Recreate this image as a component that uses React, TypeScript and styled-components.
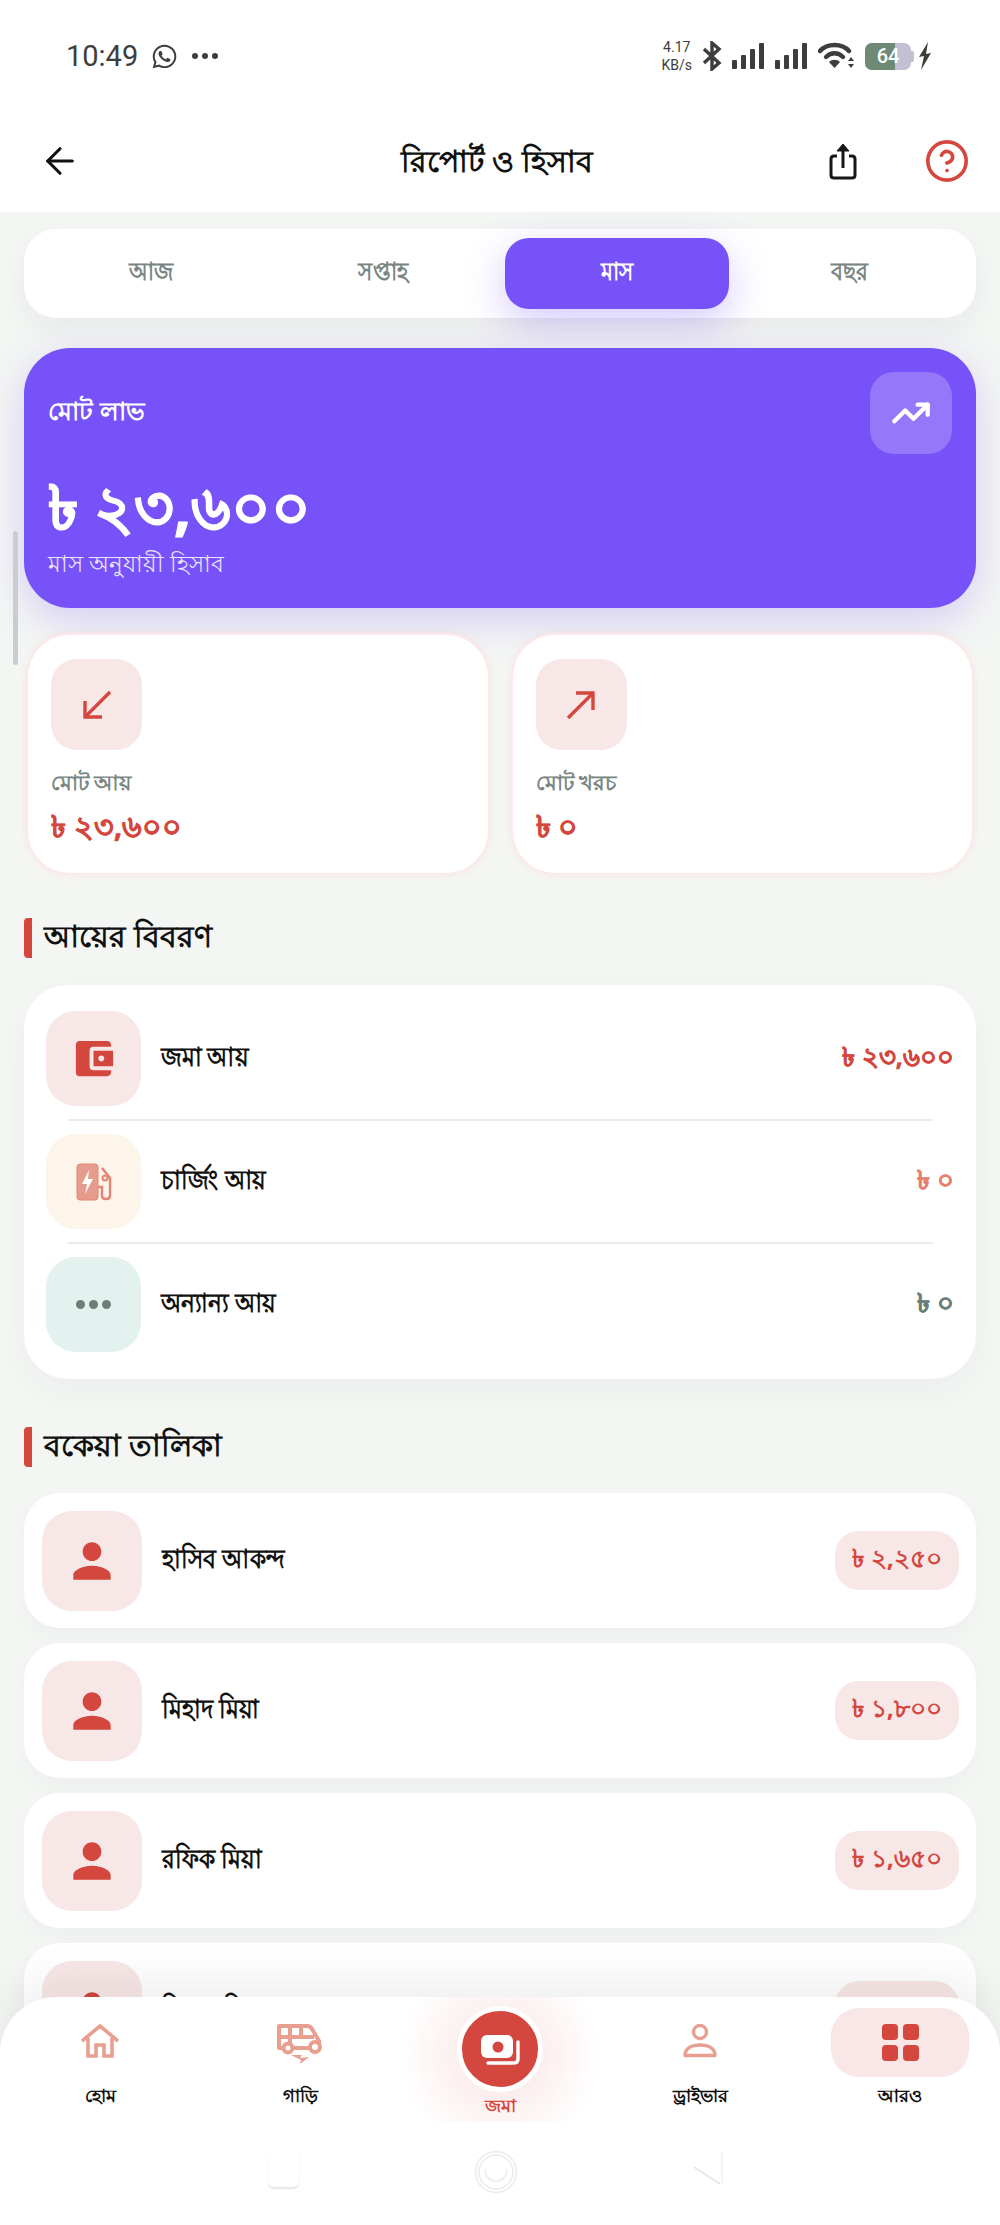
import styled, { createGlobalStyle } from "styled-components";
import { CircleHelp, ArrowLeft, TrendingUp } from "lucide-react";
import { FaWhatsapp } from "react-icons/fa";
import { MdAccountBalanceWallet, MdPerson } from "react-icons/md";

const RED = "#d4473e";
const PURPLE = "#7752f8";
const SOFT = "#e89f8f";
const INK = "#3d3d3d";
const FONT = `"Noto Sans", "Liberation Sans", sans-serif`;

const GlobalStyle = createGlobalStyle`
    html, body { margin: 0; padding: 0; background: #fff; }
    * { box-sizing: border-box; }
`;

function BluetoothIcon() {
    return (
        <svg width="20" height="30" viewBox="0 0 20 30" fill="none" stroke={INK} strokeWidth="3.4">
            <path d="M2 8 L17 22 L10 28 V2 L17 8 L2 22" />
        </svg>
    );
}

function SignalBars() {
    return (
        <svg width="33" height="26" viewBox="0 0 33 26" fill={INK}>
            <rect x="0" y="17" width="5" height="9" rx="1" />
            <rect x="9" y="12" width="5" height="14" rx="1" />
            <rect x="18" y="6" width="5" height="20" rx="1" />
            <rect x="27" y="0" width="5" height="26" rx="1" />
        </svg>
    );
}

function WifiIcon() {
    return (
        <svg width="37" height="28" viewBox="0 0 37 28" fill="none">
            <path d="M2 9 C9 1 24 1 31 9" stroke={INK} strokeWidth="4.4" strokeLinecap="round" />
            <path d="M8 15 C13 10 20 10 25 15" stroke={INK} strokeWidth="4.4" strokeLinecap="round" />
            <path d="M11 20 C14 17 19 17 22 20 L16.5 26 Z" fill={INK} />
            <path d="M30 19 L33 15 L36 19 Z M30 22 L36 22 L33 26 Z" fill={INK} />
        </svg>
    );
}

function BoltIcon() {
    return (
        <svg width="14" height="28" viewBox="0 0 14 28" fill={INK}>
            <path d="M10 0 L1 15 L6 14 L3 28 L13 11 L8 12 Z" />
        </svg>
    );
}

function ShareIcon() {
    return (
        <svg width="28" height="38" viewBox="0 0 28 38" fill="none" stroke="#15181a" strokeWidth="3">
            <path d="M8 14 H5 Q2 14 2 17 V33 Q2 36 5 36 H23 Q26 36 26 33 V17 Q26 14 23 14 H20" />
            <path d="M14 26 V4" />
            <path d="M8 9 L14 2 L20 9 Z" fill="#15181a" strokeWidth="1" />
        </svg>
    );
}

function ArrowIn() {
    return (
        <svg width="30" height="30" viewBox="0 0 30 30" fill="none" stroke={RED} strokeWidth="3.4">
            <path d="M28 2 L4 26" />
            <path d="M3 11 V27 H20" />
        </svg>
    );
}

function ArrowOut() {
    return (
        <svg width="30" height="30" viewBox="0 0 30 30" fill="none" stroke={RED} strokeWidth="3.4">
            <path d="M2 28 L26 4" />
            <path d="M10 3 H27 V20" />
        </svg>
    );
}

function ChargeIcon() {
    return (
        <svg width="36" height="38" viewBox="0 0 36 38">
            <rect x="1" y="1" width="21" height="36" rx="3" fill="#e59c8d" stroke="#e58474" />
            <path d="M13 7 L6 21 L11 21 L9 31 L17 16 L12 16 Z" fill="#fff" />
            <path d="M22 24 H26 V33 C26 37 34 37 34 33 V15 L26 5" fill="none" stroke="#e58474" strokeWidth="2.4" />
            <circle cx="29" cy="15" r="2.5" fill="none" stroke="#e58474" strokeWidth="2" />
        </svg>
    );
}

function HomeIcon() {
    return (
        <svg width="38" height="34" viewBox="0 0 38 34" fill="none" stroke={SOFT} strokeWidth="3.6">
            <path d="M1 17 L19 2 L37 17" />
            <path d="M7 14 V32 H15 V21 H23 V32 H31 V14" />
        </svg>
    );
}

function VehicleIcon() {
    return (
        <svg width="46" height="40" viewBox="0 0 46 40" fill="none" stroke={SOFT} strokeWidth="4">
            <path d="M2 2 H30 C33 2 34 3 35 5 L42 17 V24 H2 Z" strokeLinejoin="round" />
            <path d="M13 2 V24 M2 13 H37 M24 2 V13" />
            <circle cx="11" cy="24" r="4.5" fill="#fff" />
            <circle cx="38" cy="23" r="5" fill="#fff" />
            <path d="M14 31 L25 31 L23 34 L32 33 L23 40 L24 36 Z" fill={SOFT} stroke="none" />
        </svg>
    );
}

function DriverIcon() {
    return (
        <svg width="34" height="34" viewBox="0 0 34 34" fill="none" stroke={SOFT} strokeWidth="3.4">
            <circle cx="17" cy="8" r="6.5" />
            <path d="M2 31.5 C2 24 9 21 17 21 C25 21 32 24 32 31.5 Z" strokeLinejoin="round" />
        </svg>
    );
}

function AppsIcon() {
    return (
        <svg width="37" height="37" viewBox="0 0 37 37" fill={RED}>
            <rect x="0" y="0" width="16" height="16" rx="4" />
            <rect x="21" y="0" width="16" height="16" rx="4" />
            <rect x="0" y="21" width="16" height="16" rx="4" />
            <rect x="21" y="21" width="16" height="16" rx="4" />
        </svg>
    );
}

function CashIcon() {
    return (
        <svg width="42" height="32" viewBox="0 0 42 32" fill="none">
            <rect x="2" y="2" width="32" height="23" rx="6" fill="#fff" />
            <circle cx="19" cy="14" r="5.5" fill={RED} />
            <path d="M39 9 V26 Q39 30 35 30 H9" stroke="#fff" strokeWidth="3.4" strokeLinecap="round" />
        </svg>
    );
}

function GestureHome() {
    return (
        <svg width="44" height="44" viewBox="0 0 44 44" fill="none" stroke="#ececec" strokeWidth="1.6">
            <circle cx="22" cy="22" r="20.5" />
            <circle cx="22" cy="22" r="17" />
            <path d="M11 19 C11 27 16 31 22 31 C28 31 33 27 33 19" />
        </svg>
    );
}

function GestureBackIcon() {
    return (
        <svg width="30" height="36" viewBox="0 0 30 36" fill="none">
            <path d="M1 17 L27 34" stroke="#e6e6e6" strokeWidth="2" />
            <path d="M29 2 V33" stroke="#f3f3f3" strokeWidth="2" />
        </svg>
    );
}

const incomeRows = [
    { label: "জমা আয়", amount: "৳ ২৩,৬০০", tone: "wallet" },
    { label: "চার্জিং আয়", amount: "৳ ০", tone: "charge" },
    { label: "অন্যান্য আয়", amount: "৳ ০", tone: "other" },
] as const;

const dues = [
    { name: "হাসিব আকন্দ", amount: "৳ ২,২৫০" },
    { name: "মিহাদ মিয়া", amount: "৳ ১,৮০০" },
    { name: "রফিক মিয়া", amount: "৳ ১,৬৫০" },
    { name: "সিয়াম মিয়া", amount: "৳ ১,৫০০" },
];

function App() {
    return (
        <Screen>
            <GlobalStyle />
            <StatusBar>
                <StatusLeft>
                    <Clock>10:49</Clock>
                    <FaWhatsapp size={27} color={INK} />
                    <StatusDots>
                        <i /><i /><i />
                    </StatusDots>
                </StatusLeft>
                <StatusRight>
                    <NetSpeed>4.17<br />KB/s</NetSpeed>
                    <BluetoothIcon />
                    <SignalBars />
                    <SignalBars />
                    <WifiIcon />
                    <Battery>
                        <BatteryFill />
                        <BatteryText>64</BatteryText>
                    </Battery>
                    <BoltIcon />
                </StatusRight>
            </StatusBar>

            <AppHeader>
                <ArrowLeft size={42} color="#111" strokeWidth={1.8} />
                <Title>রিপোর্ট ও হিসাব</Title>
                <HeaderActions>
                    <ShareIcon />
                    <CircleHelp size={46} color={RED} strokeWidth={1.9} />
                </HeaderActions>
            </AppHeader>

            <Content>
                <Tabs>
                    <Tab><Squeezed>আজ</Squeezed></Tab>
                    <Tab><Squeezed>সপ্তাহ</Squeezed></Tab>
                    <Tab $active><Squeezed>মাস</Squeezed></Tab>
                    <Tab><Squeezed>বছর</Squeezed></Tab>
                </Tabs>

                <Hero>
                    <HeroTop>
                        <HeroLabel>মোট লাভ</HeroLabel>
                        <HeroIcon><TrendingUp size={40} color="#fff" strokeWidth={2.6} /></HeroIcon>
                    </HeroTop>
                    <HeroAmount>৳ ২৩,৬০০</HeroAmount>
                    <HeroSub>মাস অনুযায়ী হিসাব</HeroSub>
                </Hero>

                <Stats>
                    <StatCard>
                        <StatIcon><ArrowIn /></StatIcon>
                        <StatLabel>মোট আয়</StatLabel>
                        <StatAmount>৳ ২৩,৬০০</StatAmount>
                    </StatCard>
                    <StatCard>
                        <StatIcon><ArrowOut /></StatIcon>
                        <StatLabel>মোট খরচ</StatLabel>
                        <StatAmount>৳ ০</StatAmount>
                    </StatCard>
                </Stats>

                <SectionTitle>আয়ের বিবরণ</SectionTitle>
                <IncomeCard>
                    {incomeRows.map((row) => (
                        <IncomeRow key={row.label}>
                            <IncomeIcon $tone={row.tone}>
                                {row.tone === "wallet" && <MdAccountBalanceWallet size={47} color={RED} />}
                                {row.tone === "charge" && <ChargeIcon />}
                                {row.tone === "other" && <MoreDots><i /><i /><i /></MoreDots>}
                            </IncomeIcon>
                            <RowLabel>{row.label}</RowLabel>
                            <IncomeAmount $tone={row.tone}>{row.amount}</IncomeAmount>
                        </IncomeRow>
                    ))}
                </IncomeCard>

                <SectionTitle $second>বকেয়া তালিকা</SectionTitle>
                <DueList>
                    {dues.map((due) => (
                        <DueCard key={due.name}>
                            <DueIcon><MdPerson size={56} color={RED} /></DueIcon>
                            <RowLabel>{due.name}</RowLabel>
                            <DueBadge>{due.amount}</DueBadge>
                        </DueCard>
                    ))}
                </DueList>
            </Content>

            <Scrollbar />

            <BottomNav>
                <NavItem>
                    <NavGlyph><HomeIcon /></NavGlyph>
                    <NavText>হোম</NavText>
                </NavItem>
                <NavItem>
                    <NavGlyph><VehicleIcon /></NavGlyph>
                    <NavText>গাড়ি</NavText>
                </NavItem>
                <CenterItem>
                    <CenterButton><CashIcon /></CenterButton>
                    <NavText $red>জমা</NavText>
                </CenterItem>
                <NavItem>
                    <NavGlyph><DriverIcon /></NavGlyph>
                    <NavText>ড্রাইভার</NavText>
                </NavItem>
                <NavItem>
                    <MoreGlyph><AppsIcon /></MoreGlyph>
                    <NavText>আরও</NavText>
                </NavItem>

                <GestureBar>
                    <GestureSquare />
                    <GestureHome />
                    <GestureBackIcon />
                </GestureBar>
            </BottomNav>
        </Screen>
    );
}

const Screen = styled.div`
    position: relative;
    width: 1000px;
    height: 2225px;
    overflow: hidden;
    background: #f4f6f4;
    font-family: ${FONT};
    color: #111;
`;

const StatusBar = styled.div`
    height: 110px;
    padding: 2px 68px 0 66px;
    background: #fff;
    display: flex;
    align-items: center;
    justify-content: space-between;
`;

const StatusLeft = styled.div`
    display: flex;
    align-items: center;
    gap: 13px;
`;

const Clock = styled.span`
    font-family: Roboto, sans-serif;
    font-size: 29px;
    color: ${INK};
`;

const StatusDots = styled.span`
    display: flex;
    gap: 4px;
    margin-left: 1px;
    i {
        width: 6px;
        height: 6px;
        border-radius: 50%;
        background: ${INK};
    }
`;

const StatusRight = styled.div`
    display: flex;
    align-items: center;
    gap: 10px;
`;

const NetSpeed = styled.span`
    font-family: Roboto, sans-serif;
    font-size: 14px;
    line-height: 18px;
    color: ${INK};
    text-align: center;
`;

const Battery = styled.div`
    position: relative;
    width: 46px;
    height: 27px;
    margin-right: -3px;
    border-radius: 7px;
    background: #c2c0d4;
    &::after {
        content: "";
        position: absolute;
        right: -3px;
        top: 8px;
        width: 3px;
        height: 11px;
        border-radius: 0 2px 2px 0;
        background: #c2c0d4;
    }
`;

const BatteryFill = styled.div`
    width: 66%;
    height: 100%;
    border-radius: 7px 0 0 7px;
    background: #6e8a75;
`;

const BatteryText = styled.span`
    position: absolute;
    inset: 0;
    display: flex;
    align-items: center;
    justify-content: center;
    font-family: Roboto, sans-serif;
    font-size: 20px;
    font-weight: 500;
    color: #fff;
`;

const AppHeader = styled.header`
    height: 102px;
    padding: 0 30px 0 39px;
    margin-bottom: 17px;
    background: #fff;
    display: flex;
    align-items: center;
    justify-content: space-between;
`;

const Title = styled.h1`
    margin: 0 0 0 84px;
    font-size: 30px;
    font-weight: 700;
    line-height: 1;
    color: #111;
`;

const HeaderActions = styled.div`
    display: flex;
    align-items: center;
    gap: 67px;
`;

const Content = styled.main`
    padding: 0 24px;
    display: flex;
    flex-direction: column;
`;

const Tabs = styled.nav`
    height: 89px;
    padding: 9px 14px;
    margin-bottom: 30px;
    border-radius: 32px;
    background: #fff;
    display: grid;
    grid-template-columns: repeat(4, 1fr);
    gap: 9px;
    box-shadow: 0 12px 30px rgba(30, 40, 50, 0.05);
`;

const Tab = styled.button<{ $active?: boolean }>`
    border: 0;
    border-radius: 24px;
    font-family: ${FONT};
    font-size: 25px;
    font-weight: 700;
    color: ${(p) => (p.$active ? "#fff" : "#7a8683")};
    background: ${(p) => (p.$active ? PURPLE : "transparent")};
    box-shadow: ${(p) => (p.$active ? "0 14px 40px rgba(119, 82, 248, 0.3)" : "none")};
`;

const Squeezed = styled.span`
    display: inline-block;
    transform: scaleX(0.86);
`;

const Hero = styled.section`
    height: 260px;
    padding: 24px 24px 0 24px;
    margin-bottom: 25px;
    border-radius: 46px;
    background: ${PURPLE};
    color: #fff;
    box-shadow: 0 12px 40px rgba(119, 82, 248, 0.25);
`;

const HeroTop = styled.div`
    display: flex;
    align-items: center;
    justify-content: space-between;
`;

const HeroLabel = styled.span`
    font-size: 25px;
    font-weight: 600;
`;

const HeroIcon = styled.div`
    width: 82px;
    height: 82px;
    border-radius: 24px;
    background: rgba(255, 255, 255, 0.22);
    display: flex;
    align-items: center;
    justify-content: center;
`;

const HeroAmount = styled.div`
    margin-top: 17px;
    font-size: 61px;
    font-weight: 700;
    line-height: 70px;
    -webkit-text-stroke: 1px #fff;
`;

const HeroSub = styled.div`
    margin-top: 7px;
    font-size: 23px;
    line-height: 30px;
    opacity: 0.85;
`;

const Stats = styled.section`
    margin: 0 2px;
    display: grid;
    grid-template-columns: 1fr 1fr;
    gap: 21px;
`;

const StatCard = styled.article`
    height: 242px;
    padding: 24px 23px 0 23px;
    border-radius: 44px;
    border: 2px solid #fce9e8;
    background: #fff;
    box-shadow: 0 0 6px rgba(250, 200, 200, 0.35);
`;

const StatIcon = styled.div`
    width: 91px;
    height: 91px;
    border-radius: 26px;
    background: #f8e7e7;
    display: flex;
    align-items: center;
    justify-content: center;
`;

const StatLabel = styled.div`
    margin-top: 18px;
    font-size: 21px;
    line-height: 28px;
    font-weight: 600;
    color: #7a8683;
`;

const StatAmount = styled.div`
    margin-top: 12px;
    font-size: 30px;
    line-height: 36px;
    font-weight: 700;
    color: ${RED};
    -webkit-text-stroke: 0.4px ${RED};
`;

const SectionTitle = styled.h2<{ $second?: boolean }>`
    margin: ${(p) => (p.$second ? "48px 0 26px" : "43px 0 27px")};
    height: 40px;
    padding-left: 12px;
    border-left: 8px solid ${RED};
    border-radius: 4px;
    font-size: 30px;
    line-height: 36px;
    font-weight: 700;
    color: #111;
`;

const IncomeCard = styled.section`
    height: 394px;
    padding: 26px 22px;
    border-radius: 44px;
    background: #fff;
    display: flex;
    flex-direction: column;
    gap: 28px;
    box-shadow: 0 12px 32px rgba(30, 40, 50, 0.04);
`;

const IncomeRow = styled.div`
    position: relative;
    height: 95px;
    display: flex;
    align-items: center;
    & + &::before {
        content: "";
        position: absolute;
        top: -15px;
        left: 22px;
        right: 21px;
        height: 2px;
        background: #e9ebeb;
    }
`;

const TONES = {
    wallet: { bg: "#f8e7e7", fg: RED },
    charge: { bg: "#fdf5e9", fg: "#e8806f" },
    other: { bg: "#e3f1ef", fg: "#6b7f78" },
};

const IncomeIcon = styled.div<{ $tone: keyof typeof TONES }>`
    width: 95px;
    height: 95px;
    flex: none;
    margin-right: 20px;
    border-radius: 30px;
    background: ${(p) => TONES[p.$tone].bg};
    display: flex;
    align-items: center;
    justify-content: center;
`;

const MoreDots = styled.span`
    display: flex;
    gap: 4px;
    i {
        width: 9px;
        height: 9px;
        border-radius: 50%;
        background: #6b7f78;
    }
`;

const RowLabel = styled(Squeezed)`
    transform-origin: left center;
    font-size: 27px;
    font-weight: 700;
    color: #111;
`;

const IncomeAmount = styled.span<{ $tone: keyof typeof TONES }>`
    margin-left: auto;
    font-size: 26px;
    font-weight: 700;
    color: ${(p) => TONES[p.$tone].fg};
    -webkit-text-stroke: 0.4px ${(p) => TONES[p.$tone].fg};
`;

const DueList = styled.section`
    display: flex;
    flex-direction: column;
    gap: 15px;
`;

const DueCard = styled.article`
    height: 135px;
    flex: none;
    padding: 0 17px 0 18px;
    border-radius: 36px;
    background: #fff;
    display: flex;
    align-items: center;
    box-shadow: 0 8px 24px rgba(30, 40, 50, 0.03);
`;

const DueIcon = styled.div`
    width: 100px;
    height: 100px;
    flex: none;
    margin-right: 20px;
    border-radius: 30px;
    background: #f8e7e7;
    display: flex;
    align-items: center;
    justify-content: center;
`;

const DueBadge = styled.span`
    width: 124px;
    height: 59px;
    margin-left: auto;
    border-radius: 24px;
    background: #f8e7e7;
    display: flex;
    align-items: center;
    justify-content: center;
    font-size: 25px;
    font-weight: 700;
    color: ${RED};
`;

const Scrollbar = styled.div`
    position: absolute;
    left: 13px;
    top: 531px;
    width: 5px;
    height: 134px;
    border-radius: 3px;
    background: #c9cdd2;
`;

const BottomNav = styled.nav`
    position: absolute;
    left: 0;
    right: 0;
    top: 1997px;
    bottom: 0;
    border-radius: 56px 56px 0 0;
    background: #fff;
    box-shadow: 0 -20px 40px rgba(0, 0, 0, 0.06);
    display: grid;
    grid-template-columns: repeat(5, 200px);
    grid-template-rows: 125px 1fr;
`;

const NavItem = styled.div`
    display: flex;
    flex-direction: column;
    align-items: center;
`;

const NavGlyph = styled.div`
    height: 85px;
    padding-top: 27px;
    display: flex;
    align-items: flex-start;
    justify-content: center;
`;

const MoreGlyph = styled.div`
    width: 138px;
    height: 69px;
    margin: 11px 0 5px;
    border-radius: 28px;
    background: #f9e6e6;
    display: flex;
    align-items: center;
    justify-content: center;
`;

const NavText = styled.span<{ $red?: boolean }>`
    font-size: 18px;
    line-height: 26px;
    font-weight: 600;
    color: ${(p) => (p.$red ? RED : "#111")};
`;

const CenterItem = styled.div`
    padding-top: 9px;
    display: flex;
    flex-direction: column;
    align-items: center;
    background: radial-gradient(circle 100px at 50% 58px, rgba(212, 71, 62, 0.15), rgba(212, 71, 62, 0) 100%);
`;

const CenterButton = styled.div`
    width: 86px;
    height: 86px;
    flex: none;
    border-radius: 50%;
    border: 5px solid #fff;
    background: ${RED};
    display: flex;
    align-items: center;
    justify-content: center;
`;

const GestureBar = styled.div`
    grid-column: 1 / -1;
    padding: 28px 277px 0 268px;
    display: flex;
    align-items: flex-start;
    justify-content: space-between;
`;

const GestureSquare = styled.div`
    width: 31px;
    height: 33px;
    margin-top: 4px;
    border-radius: 0 0 6px 6px;
    background: #fff;
    box-shadow: 0 2px 2px rgba(0, 0, 0, 0.1);
`;

export default App;
